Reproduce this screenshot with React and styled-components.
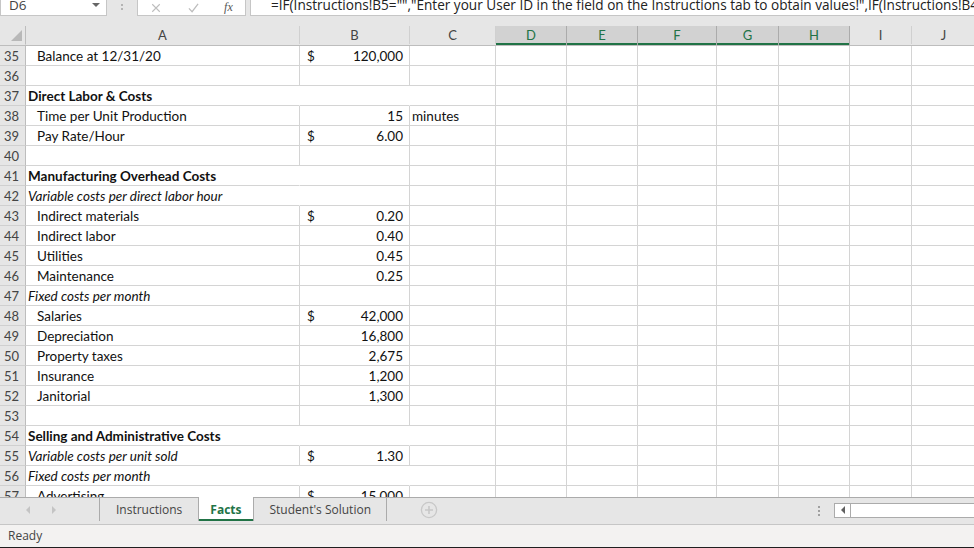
import React from "react";
import styled, { createGlobalStyle } from "styled-components";

const GlobalStyle = createGlobalStyle`
  html, body {
    margin: 0;
    padding: 0;
    background: #ffffff;
  }
  #root {
    width: 974px;
    height: 548px;
    overflow: hidden;
  }
`;

const COLS = "26px 274px 110px 86px 71px 71px 79px 62px 71px 62px 64px";
const LETTERS = ["A", "B", "C", "D", "E", "F", "G", "H", "I", "J"];
const SELECTED = ["D", "E", "F", "G", "H"];

const rows = [
  { n: 35, a: "Balance at 12/31/20", indent: true, cur: true, b: "120,000" },
  { n: 36 },
  { n: 37, a: "Direct Labor & Costs", bold: true, open: [1, 2] },
  { n: 38, a: "Time per Unit Production", indent: true, b: "15", c: "minutes" },
  { n: 39, a: "Pay Rate/Hour", indent: true, cur: true, b: "6.00" },
  { n: 40 },
  { n: 41, a: "Manufacturing Overhead Costs", bold: true, open: [1] },
  { n: 42, a: "Variable costs per direct labor hour", italic: true, open: [1] },
  { n: 43, a: "Indirect materials", indent: true, cur: true, b: "0.20" },
  { n: 44, a: "Indirect labor", indent: true, b: "0.40" },
  { n: 45, a: "Utilities", indent: true, b: "0.45" },
  { n: 46, a: "Maintenance", indent: true, b: "0.25" },
  { n: 47, a: "Fixed costs per month", italic: true },
  { n: 48, a: "Salaries", indent: true, cur: true, b: "42,000" },
  { n: 49, a: "Depreciation", indent: true, b: "16,800" },
  { n: 50, a: "Property taxes", indent: true, b: "2,675" },
  { n: 51, a: "Insurance", indent: true, b: "1,200" },
  { n: 52, a: "Janitorial", indent: true, b: "1,300" },
  { n: 53 },
  { n: 54, a: "Selling and Administrative Costs", bold: true, open: [1, 2] },
  { n: 55, a: "Variable costs per unit sold", italic: true, cur: true, b: "1.30" },
  { n: 56, a: "Fixed costs per month", italic: true, open: [1, 2] },
  { n: 57, a: "Advertising", indent: true, cur: true, b: "15,000" },
];

const Window = styled.div`
  width: 974px;
  height: 548px;
  display: flex;
  flex-direction: column;
  background: #e6e6e6;
  font-family: "Segoe UI", "Open Sans", sans-serif;
  overflow: hidden;
`;

/* formula bar */
const FormulaBar = styled.div`
  height: 16px;
  padding-bottom: 10px;
  display: flex;
  align-items: stretch;
  background: #e6e6e6;
`;

const NameBox = styled.div`
  width: 107px;
  box-sizing: border-box;
  background: #fff;
  border: 1px solid #c6c6c6;
  border-top: 0;
  display: flex;
  align-items: flex-end;
  justify-content: space-between;
  padding: 0 6px 0 8px;
  overflow: hidden;
  color: #444;
  font-size: 13.5px;
  line-height: 14px;
`;

const NameText = styled.span`
  margin-bottom: 3px;
`;

const DropArrow = styled.span`
  width: 0;
  height: 0;
  margin-bottom: 8px;
  border-left: 4px solid transparent;
  border-right: 4px solid transparent;
  border-top: 4px solid #666;
`;

const Grip = styled.div`
  width: 30px;
  display: flex;
  justify-content: center;
  align-items: flex-end;
  padding-bottom: 3px;
  box-sizing: border-box;
  gap: 2px;
  flex-direction: column;
  span {
    width: 2px;
    height: 2px;
    background: #b4b4b4;
    align-self: center;
  }
`;

const FxBox = styled.div`
  width: 109px;
  box-sizing: border-box;
  background: #fff;
  border: 1px solid #c6c6c6;
  border-top: 0;
  display: flex;
  align-items: flex-end;
  justify-content: space-around;
  padding-bottom: 2px;
`;

const FxText = styled.span`
  font-family: "Liberation Serif", serif;
  font-style: italic;
  font-size: 12px;
  line-height: 12px;
  color: #555;
`;

const FormulaInput = styled.div`
  flex: 1;
  margin-left: 4px;
  background: #fff;
  border: 1px solid #c6c6c6;
  border-top: 0;
  border-right: 0;
  overflow: hidden;
  white-space: nowrap;
  font-size: 13.6px;
  line-height: 15px;
  color: #222;
  padding-left: 20px;
  display: flex;
  align-items: flex-end;
  span {
    flex-shrink: 0;
    margin-bottom: 3px;
  }
`;

/* sheet grid */
const Sheet = styled.div`
  flex: 1;
  overflow: hidden;
  background: #fff;
  font-family: "Lato", "Liberation Sans", sans-serif;
  font-size: 13.5px;
  color: #111;
`;

const HeaderRow = styled.div`
  display: grid;
  grid-template-columns: ${COLS};
  height: 20px;
  box-sizing: border-box;
  background: #e6e6e6;
  border-bottom: 1px solid #bdbdbd;
`;

const Corner = styled.div`
  position: relative;
  border-right: 1px solid #bdbdbd;
  &::after {
    content: "";
    position: absolute;
    right: 3px;
    bottom: 3px;
    width: 0;
    height: 0;
    border-left: 11px solid transparent;
    border-bottom: 11px solid #b8b8b8;
  }
`;

const ColHead = styled.div`
  display: flex;
  align-items: center;
  justify-content: center;
  font-size: 13px;
  color: ${(p) => (p.$sel ? "#217346" : "#444")};
  background: ${(p) => (p.$sel ? "#d2d2d2" : "transparent")};
  border-right: 1px solid ${(p) => (p.$sel ? "#ababab" : "#d0d0d0")};
  box-sizing: border-box;
  box-shadow: ${(p) => (p.$sel ? "inset 0 -2px 0 #217346" : "none")};
  margin-bottom: ${(p) => (p.$sel ? "-1px" : "0")};
`;

const Row = styled.div`
  display: grid;
  grid-template-columns: ${COLS};
  height: 20px;
`;

const RowHead = styled.div`
  background: #e6e6e6;
  border-right: 1px solid #bdbdbd;
  border-bottom: 1px solid #d0d0d0;
  box-sizing: border-box;
  display: flex;
  align-items: center;
  justify-content: center;
  padding-right: 2px;
  font-size: 13px;
  color: #444;
`;

const Cell = styled.div`
  box-sizing: border-box;
  border-bottom: 1px solid #d4d4d4;
  border-right: 1px solid ${(p) => (p.$open ? "transparent" : "#d4d4d4")};
  display: flex;
  align-items: center;
  white-space: nowrap;
  overflow: visible;
  position: relative;
  z-index: ${(p) => (p.$open ? 1 : 0)};
  padding: 0 2px;
`;

const Label = styled.span`
  padding-left: ${(p) => (p.$indent ? "9px" : "0")};
  font-weight: ${(p) => (p.$bold ? 700 : 400)};
  font-style: ${(p) => (p.$italic ? "italic" : "normal")};
`;

const Amount = styled(Cell)`
  justify-content: space-between;
  padding: 0 6px 0 7px;
`;

const Dollar = styled.span`
  min-width: 8px;
`;

/* sheet tabs */
const TabBar = styled.div`
  height: 28px;
  box-sizing: border-box;
  display: flex;
  align-items: stretch;
  background: #e6e6e6;
  border-top: 1px solid #ababab;
  border-bottom: 1px solid #c6c6c6;
  font-size: 12px;
  color: #444;
`;

const NavArrows = styled.div`
  width: 100px;
  display: flex;
  align-items: center;
  padding-left: 26px;
  gap: 22px;
  box-sizing: border-box;
  border-right: 1px solid #ababab;
  margin: 0 0 3px;
`;

const NavArrow = styled.span`
  width: 0;
  height: 0;
  border-top: 4px solid transparent;
  border-bottom: 4px solid transparent;
  border-left: ${(p) => (p.$dir === "right" ? "4px solid #c4c4c4" : "0")};
  border-right: ${(p) => (p.$dir === "left" ? "4px solid #c4c4c4" : "0")};
`;

const Tab = styled.div`
  display: flex;
  align-items: center;
  justify-content: center;
  padding: 0 ${(p) => (p.$active ? "11px" : "15px")};
  margin-bottom: 3px;
  background: ${(p) => (p.$active ? "#fff" : "transparent")};
  color: ${(p) => (p.$active ? "#217346" : "#444")};
  font-weight: ${(p) => (p.$active ? 700 : 400)};
  border-left: 1px solid ${(p) => (p.$active ? "#ababab" : "transparent")};
  border-right: 1px solid ${(p) => (p.$side ? "#ababab" : p.$active ? "#ababab" : "transparent")};
  box-shadow: ${(p) => (p.$active ? "inset 0 -2px 0 #217346" : "none")};
  margin-top: -1px;
`;

const AddSheet = styled.div`
  width: 84px;
  display: flex;
  align-items: center;
  justify-content: center;
  margin-bottom: 3px;
`;

const Spacer = styled.div`
  flex: 1;
`;

const Dots = styled.div`
  display: flex;
  flex-direction: column;
  justify-content: center;
  gap: 2px;
  padding-right: 14px;
  span {
    width: 2px;
    height: 2px;
    background: #a0a0a0;
  }
`;

const HScroll = styled.div`
  width: 140px;
  height: 15px;
  align-self: center;
  margin-bottom: 2px;
  background: #fff;
  border: 1px solid #ababab;
  border-right: 0;
  box-sizing: border-box;
  display: flex;
`;

const ScrollButton = styled.div`
  width: 15px;
  border-right: 1px solid #ababab;
  display: flex;
  align-items: center;
  justify-content: center;
  span {
    width: 0;
    height: 0;
    border-top: 4px solid transparent;
    border-bottom: 4px solid transparent;
    border-right: 4px solid #606060;
  }
`;

const StatusBar = styled.div`
  height: 23px;
  box-sizing: border-box;
  background: #f3f2f1;
  border-bottom: 1px solid #1f1f1f;
  display: flex;
  align-items: center;
  padding: 0 8px 1px;
  font-size: 12px;
  color: #444;
`;

function PlusCircle() {
  return (
    <svg width="18" height="18" viewBox="0 0 18 18">
      <circle cx="9" cy="9" r="7.6" fill="none" stroke="#c8c8c8" strokeWidth="1.3" />
      <path d="M9 5v8M5 9h8" stroke="#c8c8c8" strokeWidth="1.6" />
    </svg>
  );
}

function CrossIcon() {
  return (
    <svg width="12" height="10" viewBox="0 0 12 12">
      <path d="M1.5 1.5l9 9M10.5 1.5l-9 9" stroke="#bdbdbd" strokeWidth="1.3" />
    </svg>
  );
}

function CheckIcon() {
  return (
    <svg width="13" height="10" viewBox="0 0 13 12">
      <path d="M1 6.5l3.8 4L12 1" fill="none" stroke="#bdbdbd" strokeWidth="1.5" />
    </svg>
  );
}

function DataRow({ row }) {
  const open = row.open || [];
  const cells = [];
  for (let i = 4; i <= 10; i++) cells.push(<Cell key={i} />);
  return (
    <Row>
      <RowHead>{row.n}</RowHead>
      <Cell $open={open.includes(1)}>
        {row.a && (
          <Label $indent={row.indent} $bold={row.bold} $italic={row.italic}>
            {row.a}
          </Label>
        )}
      </Cell>
      <Amount $open={open.includes(2)}>
        <Dollar>{row.cur ? "$" : ""}</Dollar>
        <span>{row.b}</span>
      </Amount>
      <Cell>{row.c && <Label>{row.c}</Label>}</Cell>
      {cells}
    </Row>
  );
}

export default function App() {
  return (
    <>
      <GlobalStyle />
      <Window>
        <FormulaBar>
          <NameBox>
            <NameText>D6</NameText>
            <DropArrow />
          </NameBox>
          <Grip>
            <span />
            <span />
          </Grip>
          <FxBox>
            <CrossIcon />
            <CheckIcon />
            <FxText>fx</FxText>
          </FxBox>
          <FormulaInput>
            <span>
              =IF(Instructions!B5="","Enter your User ID in the field on the Instructions tab to
              obtain values!",IF(Instructions!B4="","Enter your name"
            </span>
          </FormulaInput>
        </FormulaBar>

        <Sheet>
          <HeaderRow>
            <Corner />
            {LETTERS.map((l) => (
              <ColHead key={l} $sel={SELECTED.includes(l)}>
                {l}
              </ColHead>
            ))}
            <ColHead />
          </HeaderRow>
          {rows.map((r) => (
            <DataRow key={r.n} row={r} />
          ))}
        </Sheet>

        <TabBar>
          <NavArrows>
            <NavArrow $dir="left" />
            <NavArrow $dir="right" />
          </NavArrows>
          <Tab>Instructions</Tab>
          <Tab $active>Facts</Tab>
          <Tab $side>Student's Solution</Tab>
          <AddSheet>
            <PlusCircle />
          </AddSheet>
          <Spacer />
          <Dots>
            <span />
            <span />
            <span />
          </Dots>
          <HScroll>
            <ScrollButton>
              <span />
            </ScrollButton>
          </HScroll>
        </TabBar>

        <StatusBar>Ready</StatusBar>
      </Window>
    </>
  );
}
